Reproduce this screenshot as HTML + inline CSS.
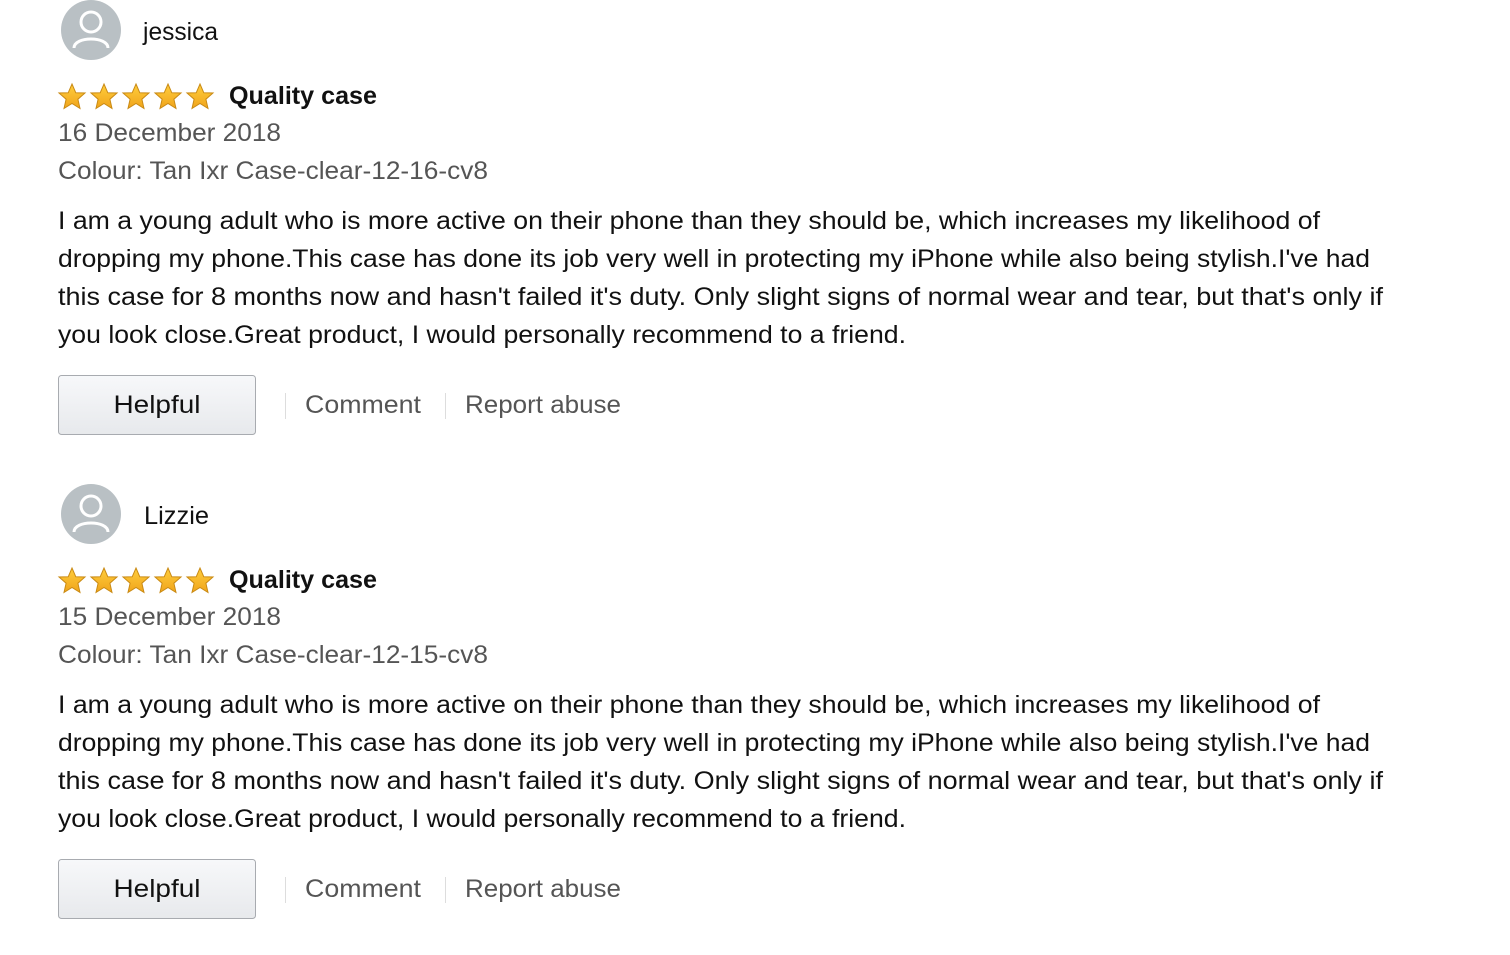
<!DOCTYPE html>
<html><head><meta charset="utf-8"><style>
html,body{margin:0;padding:0;background:#fff;width:1510px;height:955px;overflow:hidden}
svg text{font-family:"Liberation Sans",sans-serif}
</style></head><body>
<svg width="1510" height="955" viewBox="0 0 1510 955" xmlns="http://www.w3.org/2000/svg">
<defs>
<linearGradient id="sg" x1="0" y1="0" x2="0" y2="1"><stop offset="0" stop-color="#ffce3d"/><stop offset="1" stop-color="#f0a41b"/></linearGradient>
<linearGradient id="bg" x1="0" y1="0" x2="0" y2="1"><stop offset="0" stop-color="#f7f8fa"/><stop offset="1" stop-color="#e7e9ec"/></linearGradient>
<g id="star"><path d="M0,-13 L3.8,-4.2 L13,-4 L5.9,2.2 L8,11.5 L0,6.5 L-8,11.5 L-5.9,2.2 L-13,-4 L-3.8,-4.2Z" fill="url(#sg)" stroke="#c98a14" stroke-width="1"/></g>
<g id="rev">
<circle cx="91" cy="30" r="30" fill="#b9c0c4"/>
<circle cx="91" cy="22" r="10" fill="none" stroke="#fff" stroke-width="3"/>
<path d="M74,48 C74,36 108,36 108,48" fill="none" stroke="#fff" stroke-width="3"/>
<text x="143" y="40" font-size="25" fill="#111" textLength="75" lengthAdjust="spacingAndGlyphs">jessica</text>
<use href="#star" x="72" y="97"/><use href="#star" x="104" y="97"/><use href="#star" x="136" y="97"/><use href="#star" x="168" y="97"/><use href="#star" x="200" y="97"/>
<text x="229" y="104" font-size="25" font-weight="bold" fill="#111" textLength="148" lengthAdjust="spacingAndGlyphs">Quality case</text>
<text x="58" y="141" font-size="25" fill="#555" textLength="223" lengthAdjust="spacingAndGlyphs">16 December 2018</text>
<text x="58" y="179" font-size="25" fill="#555" textLength="430" lengthAdjust="spacingAndGlyphs">Colour: Tan Ixr Case-clear-12-16-cv8</text>
<text x="58" y="229" font-size="25" fill="#111" textLength="1262" lengthAdjust="spacingAndGlyphs">I am a young adult who is more active on their phone than they should be, which increases my likelihood of</text>
<text x="58" y="267" font-size="25" fill="#111" textLength="1312" lengthAdjust="spacingAndGlyphs">dropping my phone.This case has done its job very well in protecting my iPhone while also being stylish.I've had</text>
<text x="58" y="305" font-size="25" fill="#111" textLength="1325" lengthAdjust="spacingAndGlyphs">this case for 8 months now and hasn't failed it's duty. Only slight signs of normal wear and tear, but that's only if</text>
<text x="58" y="343" font-size="25" fill="#111" textLength="848" lengthAdjust="spacingAndGlyphs">you look close.Great product, I would personally recommend to a friend.</text>
<rect x="58.5" y="375.5" width="197" height="59" rx="3" fill="url(#bg)" stroke="#a8abb0"/>
<text x="157" y="413" font-size="25" fill="#111" text-anchor="middle" textLength="87" lengthAdjust="spacingAndGlyphs">Helpful</text>
<rect x="285" y="393" width="1" height="26" fill="#ddd"/>
<text x="305" y="413" font-size="25" fill="#555" textLength="116" lengthAdjust="spacingAndGlyphs">Comment</text>
<rect x="445" y="393" width="1" height="26" fill="#ddd"/>
<text x="465" y="413" font-size="25" fill="#555" textLength="156" lengthAdjust="spacingAndGlyphs">Report abuse</text>
</g>
</defs>
<g>
<circle cx="91" cy="30" r="30" fill="#b9c0c4"/>
<circle cx="91" cy="22" r="10" fill="none" stroke="#fff" stroke-width="3"/>
<path d="M74,48 C74,36 108,36 108,48" fill="none" stroke="#fff" stroke-width="3"/>
<text x="143" y="40" font-size="25" fill="#111" textLength="75" lengthAdjust="spacingAndGlyphs">jessica</text>
<use href="#star" x="72" y="97"/><use href="#star" x="104" y="97"/><use href="#star" x="136" y="97"/><use href="#star" x="168" y="97"/><use href="#star" x="200" y="97"/>
<text x="229" y="104" font-size="25" font-weight="bold" fill="#111" textLength="148" lengthAdjust="spacingAndGlyphs">Quality case</text>
<text x="58" y="141" font-size="25" fill="#555" textLength="223" lengthAdjust="spacingAndGlyphs">16 December 2018</text>
<text x="58" y="179" font-size="25" fill="#555" textLength="430" lengthAdjust="spacingAndGlyphs">Colour: Tan Ixr Case-clear-12-16-cv8</text>
<text x="58" y="229" font-size="25" fill="#111" textLength="1262" lengthAdjust="spacingAndGlyphs">I am a young adult who is more active on their phone than they should be, which increases my likelihood of</text>
<text x="58" y="267" font-size="25" fill="#111" textLength="1312" lengthAdjust="spacingAndGlyphs">dropping my phone.This case has done its job very well in protecting my iPhone while also being stylish.I've had</text>
<text x="58" y="305" font-size="25" fill="#111" textLength="1325" lengthAdjust="spacingAndGlyphs">this case for 8 months now and hasn't failed it's duty. Only slight signs of normal wear and tear, but that's only if</text>
<text x="58" y="343" font-size="25" fill="#111" textLength="848" lengthAdjust="spacingAndGlyphs">you look close.Great product, I would personally recommend to a friend.</text>
<rect x="58.5" y="375.5" width="197" height="59" rx="3" fill="url(#bg)" stroke="#a8abb0"/>
<text x="157" y="413" font-size="25" fill="#111" text-anchor="middle" textLength="87" lengthAdjust="spacingAndGlyphs">Helpful</text>
<rect x="285" y="393" width="1" height="26" fill="#ddd"/>
<text x="305" y="413" font-size="25" fill="#555" textLength="116" lengthAdjust="spacingAndGlyphs">Comment</text>
<rect x="445" y="393" width="1" height="26" fill="#ddd"/>
<text x="465" y="413" font-size="25" fill="#555" textLength="156" lengthAdjust="spacingAndGlyphs">Report abuse</text>
</g>
<g transform="translate(0,484)">
<circle cx="91" cy="30" r="30" fill="#b9c0c4"/>
<circle cx="91" cy="22" r="10" fill="none" stroke="#fff" stroke-width="3"/>
<path d="M74,48 C74,36 108,36 108,48" fill="none" stroke="#fff" stroke-width="3"/>
<text x="144" y="40" font-size="25" fill="#111" textLength="65" lengthAdjust="spacingAndGlyphs">Lizzie</text>
<use href="#star" x="72" y="97"/><use href="#star" x="104" y="97"/><use href="#star" x="136" y="97"/><use href="#star" x="168" y="97"/><use href="#star" x="200" y="97"/>
<text x="229" y="104" font-size="25" font-weight="bold" fill="#111" textLength="148" lengthAdjust="spacingAndGlyphs">Quality case</text>
<text x="58" y="141" font-size="25" fill="#555" textLength="223" lengthAdjust="spacingAndGlyphs">15 December 2018</text>
<text x="58" y="179" font-size="25" fill="#555" textLength="430" lengthAdjust="spacingAndGlyphs">Colour: Tan Ixr Case-clear-12-15-cv8</text>
<text x="58" y="229" font-size="25" fill="#111" textLength="1262" lengthAdjust="spacingAndGlyphs">I am a young adult who is more active on their phone than they should be, which increases my likelihood of</text>
<text x="58" y="267" font-size="25" fill="#111" textLength="1312" lengthAdjust="spacingAndGlyphs">dropping my phone.This case has done its job very well in protecting my iPhone while also being stylish.I've had</text>
<text x="58" y="305" font-size="25" fill="#111" textLength="1325" lengthAdjust="spacingAndGlyphs">this case for 8 months now and hasn't failed it's duty. Only slight signs of normal wear and tear, but that's only if</text>
<text x="58" y="343" font-size="25" fill="#111" textLength="848" lengthAdjust="spacingAndGlyphs">you look close.Great product, I would personally recommend to a friend.</text>
<rect x="58.5" y="375.5" width="197" height="59" rx="3" fill="url(#bg)" stroke="#a8abb0"/>
<text x="157" y="413" font-size="25" fill="#111" text-anchor="middle" textLength="87" lengthAdjust="spacingAndGlyphs">Helpful</text>
<rect x="285" y="393" width="1" height="26" fill="#ddd"/>
<text x="305" y="413" font-size="25" fill="#555" textLength="116" lengthAdjust="spacingAndGlyphs">Comment</text>
<rect x="445" y="393" width="1" height="26" fill="#ddd"/>
<text x="465" y="413" font-size="25" fill="#555" textLength="156" lengthAdjust="spacingAndGlyphs">Report abuse</text>
</g>
</svg>
</body></html>
